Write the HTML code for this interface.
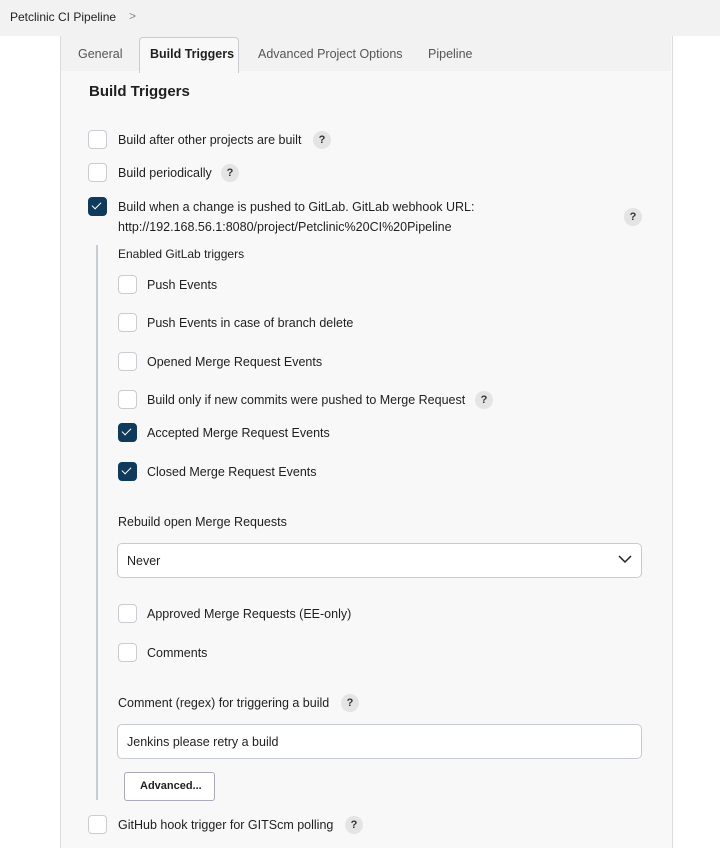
<!DOCTYPE html>
<html><head><style>
body{margin:0;width:720px;height:848px;background:#fff;font-family:"Liberation Sans",sans-serif;font-size:12.5px;color:#1f1f1f;position:relative;overflow:hidden}
.a{position:absolute;white-space:nowrap}
.top{position:absolute;left:0;top:0;width:720px;height:36px;background:#f2f2f2}
.panel{position:absolute;left:60px;top:36px;width:611px;height:812px;background:#f8f8f8;border-left:1px solid #dcdcdc;border-right:1px solid #dcdcdc}
.tabs{position:absolute;left:61px;top:36px;width:610px;height:35px;background:#f2f2f2}
.cb{position:absolute;width:17px;height:17px;border:1.5px solid #c9cdd1;border-radius:4px;background:#fff}
.cb.on{background:#0f3a5c;border-color:#0f3a5c}
.cb.on:after{content:"";position:absolute;left:5px;top:2px;width:4px;height:8px;border:solid #fff;border-width:0 1.6px 1.6px 0;transform:rotate(45deg)}
.q{position:absolute;width:18px;height:18px;border-radius:50%;background:#e4e4e4;font-weight:bold;font-size:11px;text-align:center;line-height:18px;color:#333}
.box{position:absolute;background:#fff;border:1px solid #c6ccd2;border-radius:5px;box-sizing:border-box}
</style></head><body>
<div class="top"></div>
<div class="a" style="left:10px;top:10px;font-size:12px">Petclinic CI Pipeline</div>
<div class="a" style="left:129px;top:9px;color:#888;font-size:12px">&gt;</div>
<div class="panel"></div>
<div class="tabs"></div>
<div class="a" style="left:139px;top:37px;width:98px;height:35px;background:#f8f8f8;border:1px solid #c9ccd0;border-bottom:none;border-radius:4px 4px 0 0"></div>
<div class="a" style="left:78px;top:47px;color:#555">General</div>
<div class="a" style="left:150px;top:47px;font-weight:bold">Build Triggers</div>
<div class="a" style="left:258px;top:47px;color:#555">Advanced Project Options</div>
<div class="a" style="left:428px;top:47px;color:#555">Pipeline</div>
<div class="a" style="left:89px;top:83px;font-size:15px;font-weight:bold">Build Triggers</div>

<div class="cb" style="left:88px;top:130px"></div><div class="a" style="left:118px;top:133px">Build after other projects are built</div><div class="q" style="left:313px;top:131px">?</div>
<div class="cb" style="left:88px;top:163px"></div><div class="a" style="left:118px;top:166px">Build periodically</div><div class="q" style="left:221px;top:164px">?</div>
<div class="cb on" style="left:88px;top:197px"></div><div class="a" style="left:118px;top:200px">Build when a change is pushed to GitLab. GitLab webhook URL:</div>
<div class="a" style="left:118px;top:220px">http://192.168.56.1:8080/project/Petclinic%20CI%20Pipeline</div><div class="q" style="left:624px;top:208px">?</div>

<div class="a" style="left:96px;top:245px;width:2px;height:555px;background:#c8ced3"></div>
<div class="a" style="left:118px;top:247px;font-size:12px">Enabled GitLab triggers</div>
<div class="cb" style="left:118px;top:275px"></div><div class="a" style="left:147px;top:278px">Push Events</div>
<div class="cb" style="left:118px;top:313px"></div><div class="a" style="left:147px;top:316px">Push Events in case of branch delete</div>
<div class="cb" style="left:118px;top:352px"></div><div class="a" style="left:147px;top:355px">Opened Merge Request Events</div>
<div class="cb" style="left:118px;top:390px"></div><div class="a" style="left:147px;top:393px">Build only if new commits were pushed to Merge Request</div><div class="q" style="left:475px;top:391px">?</div>
<div class="cb on" style="left:118px;top:423px"></div><div class="a" style="left:147px;top:426px">Accepted Merge Request Events</div>
<div class="cb on" style="left:118px;top:462px"></div><div class="a" style="left:147px;top:465px">Closed Merge Request Events</div>
<div class="a" style="left:118px;top:515px">Rebuild open Merge Requests</div>
<div class="box" style="left:117px;top:543px;width:525px;height:35px"></div>
<div class="a" style="left:127px;top:554px">Never</div>
<svg class="a" style="left:618px;top:554px" width="14" height="10"><path d="M1 2 L7 8 L13 2" fill="none" stroke="#222" stroke-width="1.5"/></svg>
<div class="cb" style="left:118px;top:604px"></div><div class="a" style="left:147px;top:607px">Approved Merge Requests (EE-only)</div>
<div class="cb" style="left:118px;top:643px"></div><div class="a" style="left:147px;top:646px">Comments</div>
<div class="a" style="left:118px;top:696px">Comment (regex) for triggering a build</div><div class="q" style="left:341px;top:694px">?</div>
<div class="box" style="left:117px;top:724px;width:525px;height:35px"></div>
<div class="a" style="left:127px;top:735px">Jenkins please retry a build</div>
<div class="box" style="left:124px;top:772px;width:91px;height:29px;border-radius:3px;border-color:#aab"></div>
<div class="a" style="left:140px;top:780px;font-size:11px;font-weight:bold">Advanced...</div>
<div class="cb" style="left:88px;top:815px"></div><div class="a" style="left:118px;top:818px">GitHub hook trigger for GITScm polling</div><div class="q" style="left:345px;top:816px">?</div>
</body></html>
